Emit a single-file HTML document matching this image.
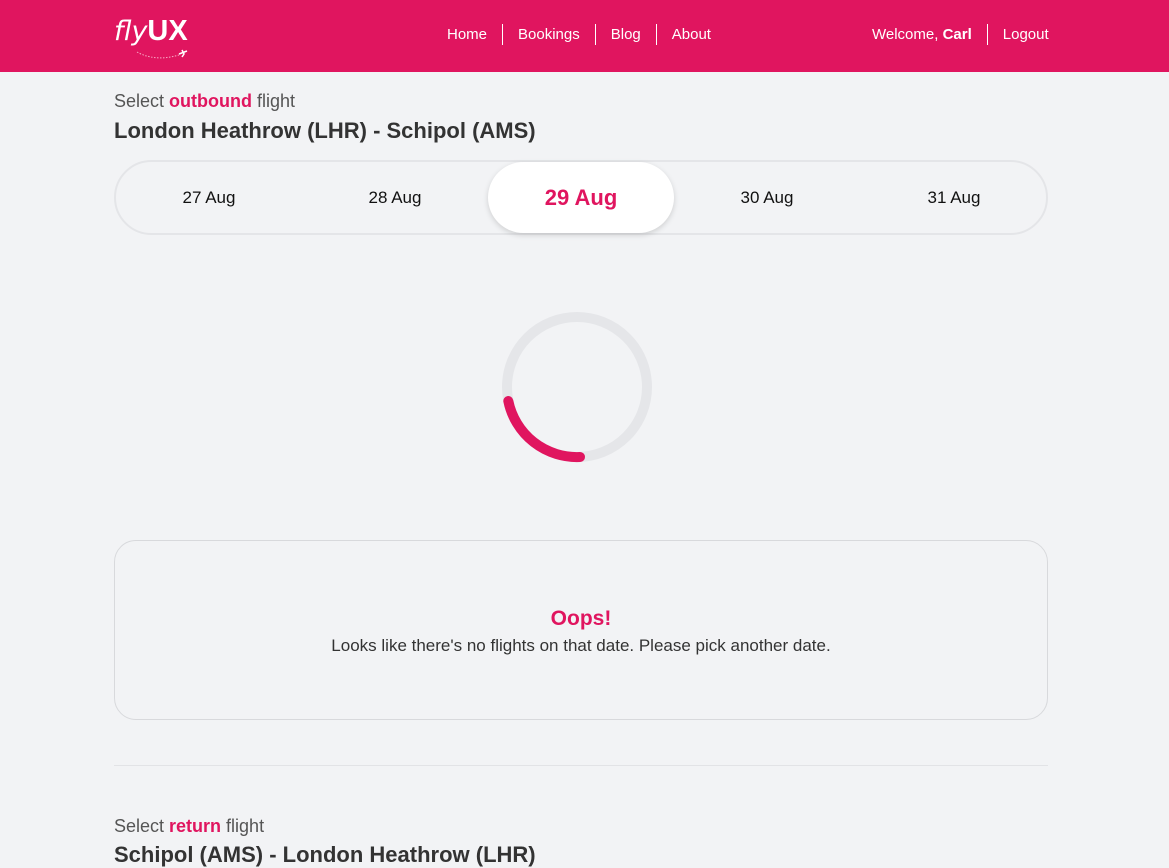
<!DOCTYPE html>
<html><head><meta charset="utf-8"><style>
*{box-sizing:border-box;margin:0;padding:0}
body{width:1169px;height:857px;overflow:hidden;background:#f2f3f5;font-family:"Liberation Sans",sans-serif;color:#333;position:relative}
.hdr{position:absolute;left:0;top:0;width:1169px;height:72px;background:#e0155f;color:#fff}
.logo{position:absolute;left:114px;top:15px;font-size:29px}
.logo i{font-weight:300;font-family:"DejaVu Sans",sans-serif;font-size:27px}
.logo b{font-weight:700}
.nav{position:absolute;top:24px;font-size:15px;display:flex}
.nav span{padding:0 15px;border-left:1px solid #fff;line-height:21px}
.nav span:first-child{border-left:none}
.sel{position:absolute;left:114px;font-size:18px;color:#555;font-weight:300}
.sel b{color:#e0155f;font-weight:700}
.h{position:absolute;left:114px;font-size:22px;font-weight:700;color:#333}
.dates{position:absolute;left:114px;top:160px;width:934px;height:75px;border-radius:38px;border:2px solid #e4e5e8;background:#f2f3f5}
.d{position:absolute;top:0;height:71px;line-height:71px;width:186px;text-align:center;font-size:17px;color:#111}
.act{background:#fff;top:0;border-radius:36px;color:#e0155f;font-weight:700;font-size:22px;box-shadow:0 2px 6px rgba(0,0,0,.15)}
.box{position:absolute;left:114px;top:540px;width:934px;height:180px;border:1px solid #d8d9dc;border-radius:22px;text-align:center}
</style></head><body>
<div class="hdr">
<div class="logo"><i>fly</i><b>UX</b></div>
<svg style="position:absolute;left:135px;top:48px" width="54" height="12"><path d="M2 4 Q20 14 44 7" stroke="#f7a9c5" stroke-width="1" stroke-dasharray="1.5 1.5" fill="none"/><path d="M44 6 L52 3 M47 2 L49 6 L47 9" stroke="#fff" stroke-width="1.5" fill="none"/></svg>
<div class="nav" style="left:432px"><span>Home</span><span>Bookings</span><span>Blog</span><span>About</span></div>
<div class="nav" style="left:857px"><span>Welcome, <b>Carl</b></span><span>Logout</span></div>
</div>
<div class="sel" style="top:91px">Select <b>outbound</b> flight</div>
<div class="h" style="top:118px">London Heathrow (LHR) - Schipol (AMS)</div>
<div class="dates">
<div class="d" style="left:0">27 Aug</div>
<div class="d" style="left:186px">28 Aug</div>
<div class="d act" style="left:372px">29 Aug</div>
<div class="d" style="left:558px">30 Aug</div>
<div class="d" style="left:745px">31 Aug</div>
</div>
<svg style="position:absolute;left:497px;top:307px" width="160" height="160"><circle cx="80" cy="80" r="70" stroke="#e5e6e9" stroke-width="10" fill="none"/><path d="M83 150 A70 70 0 0 1 11.3 94" stroke="#e0155f" stroke-width="10" stroke-linecap="round" fill="none"/></svg>
<div class="box">
<div style="margin-top:66px;font-size:21px;font-weight:700;color:#e0155f">Oops!</div>
<div style="margin-top:5px;font-size:17px;color:#333">Looks like there's no flights on that date. Please pick another date.</div>
</div>
<div style="position:absolute;left:114px;top:765px;width:934px;height:1px;background:#e2e3e6"></div>
<div class="sel" style="top:816px">Select <b>return</b> flight</div>
<div class="h" style="top:842px">Schipol (AMS) - London Heathrow (LHR)</div>
</body></html>
